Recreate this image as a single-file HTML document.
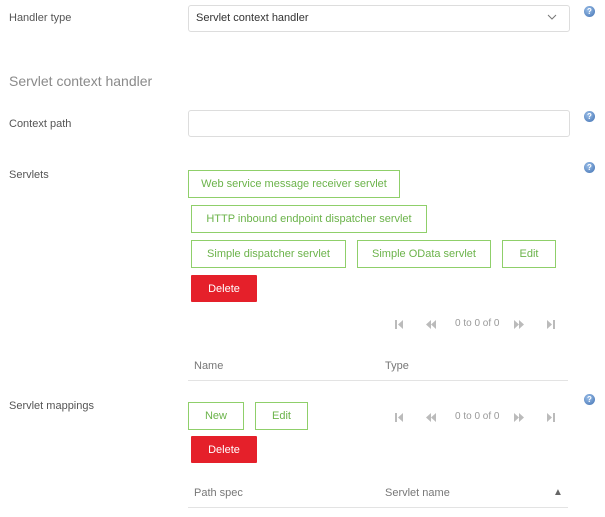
<!DOCTYPE html>
<html><head><style>
body{margin:0;width:605px;height:517px;background:#fff;font-family:"Liberation Sans",sans-serif;font-size:11px;color:#555;position:relative;overflow:hidden}
.a{position:absolute;white-space:nowrap}
.lbl{color:#555;font-size:11px}
.box{position:absolute;border:1px solid #ddd;border-radius:3px;box-sizing:border-box;background:#fff}
.btn{position:absolute;border:1.5px solid #8fcf6a;box-sizing:border-box;color:#6bb34a;font-size:11px;display:flex;align-items:center;justify-content:center;background:#fff}
.del{position:absolute;background:#e5202a;color:#fff;font-size:11px;display:flex;align-items:center;justify-content:center;border-radius:1px}
.help{position:absolute;width:11px;height:11px;border-radius:50%;background:radial-gradient(circle at 40% 35%,#9cc0ea,#3f6fb0);color:#fff;font-size:8px;font-weight:bold;text-align:center;line-height:11px}
.pg{position:absolute;color:#999;font-size:10px}
.line{position:absolute;height:1px;background:#e3e3e3}
</style></head><body>
<svg width="0" height="0" style="position:absolute"><defs>
<g id="first"><rect x="0" y="0" width="2" height="9" fill="#bbb"/><path d="M8 0L3 4.5L8 9Z" fill="#bbb"/></g>
<g id="prev"><path d="M5 0L0 4.5L5 9ZM10 0L5 4.5L10 9Z" fill="#bbb"/></g>
<g id="next"><path d="M0 0L5 4.5L0 9ZM5 0L10 4.5L5 9Z" fill="#bbb"/></g>
<g id="last"><path d="M0 0L5 4.5L0 9Z" fill="#bbb"/><rect x="6" y="0" width="2" height="9" fill="#bbb"/></g>
</defs></svg>
<div class="a lbl" style="left:9px;top:12px">Handler type</div>
<div class="box" style="left:188px;top:5px;width:382px;height:27px"></div>
<div class="a" style="left:196px;top:12px;color:#333;font-size:11px">Servlet context handler</div>
<svg class="a" style="left:547px;top:14px" width="10" height="7"><path d="M1 1L5 5L9 1" stroke="#777" fill="none"/></svg>
<div class="help" style="left:584px;top:6px">?</div>

<div class="a" style="left:9px;top:73px;font-size:14px;color:#8a8a8a">Servlet context handler</div>

<div class="a lbl" style="left:9px;top:118px">Context path</div>
<div class="box" style="left:188px;top:110px;width:382px;height:27px"></div>
<div class="help" style="left:584px;top:111px">?</div>

<div class="a lbl" style="left:9px;top:169px">Servlets</div>
<div class="help" style="left:584px;top:162px">?</div>
<div class="btn" style="left:188px;top:170px;width:212px;height:28px">Web service message receiver servlet</div>
<div class="btn" style="left:191px;top:205px;width:236px;height:28px">HTTP inbound endpoint dispatcher servlet</div>
<div class="btn" style="left:191px;top:240px;width:155px;height:28px">Simple dispatcher servlet</div>
<div class="btn" style="left:357px;top:240px;width:134px;height:28px">Simple OData servlet</div>
<div class="btn" style="left:502px;top:240px;width:54px;height:28px">Edit</div>
<div class="del" style="left:191px;top:275px;width:66px;height:27px">Delete</div>

<svg class="a" style="left:395px;top:320px" width="10" height="9"><use href="#first"/></svg>
<svg class="a" style="left:426px;top:320px" width="10" height="9"><use href="#prev"/></svg>
<div class="pg" style="left:455px;top:318px">0 to 0 of 0</div>
<svg class="a" style="left:514px;top:320px" width="10" height="9"><use href="#next"/></svg>
<svg class="a" style="left:547px;top:320px" width="10" height="9"><use href="#last"/></svg>

<div class="a" style="left:194px;top:360px;color:#777">Name</div>
<div class="a" style="left:385px;top:360px;color:#777">Type</div>
<div class="line" style="left:188px;top:380px;width:380px"></div>

<div class="a lbl" style="left:9px;top:400px">Servlet mappings</div>
<div class="help" style="left:584px;top:394px">?</div>
<div class="btn" style="left:188px;top:402px;width:56px;height:28px">New</div>
<div class="btn" style="left:255px;top:402px;width:53px;height:28px">Edit</div>
<svg class="a" style="left:395px;top:413px" width="10" height="9"><use href="#first"/></svg>
<svg class="a" style="left:426px;top:413px" width="10" height="9"><use href="#prev"/></svg>
<div class="pg" style="left:455px;top:411px">0 to 0 of 0</div>
<svg class="a" style="left:514px;top:413px" width="10" height="9"><use href="#next"/></svg>
<svg class="a" style="left:547px;top:413px" width="10" height="9"><use href="#last"/></svg>
<div class="del" style="left:191px;top:436px;width:66px;height:27px">Delete</div>

<div class="a" style="left:194px;top:487px;color:#777">Path spec</div>
<div class="a" style="left:385px;top:487px;color:#777">Servlet name</div>
<div class="a" style="left:553px;top:487px;color:#666;font-size:10px">▲</div>
<div class="line" style="left:188px;top:507px;width:380px"></div>
</body></html>
